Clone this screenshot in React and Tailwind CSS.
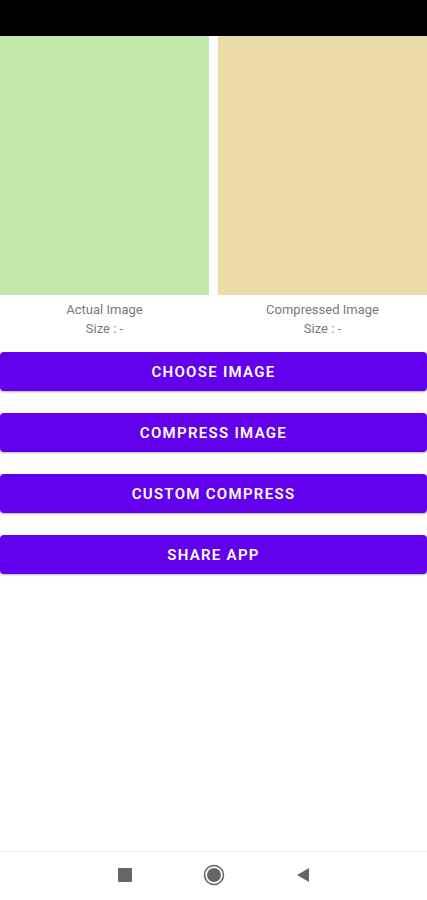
import React from 'react';

const buttons = ['Choose Image', 'Compress Image', 'Custom Compress', 'Share App'];

export default function App() {
  return (
    <div className="w-[427px] h-[900px] bg-white flex flex-col" style={{ fontFamily: 'Roboto, "Liberation Sans", sans-serif' }}>
      {/* status bar */}
      <div className="h-[36px] bg-black shrink-0"></div>

      {/* preview panels */}
      <div className="flex justify-between">
        <div className="w-[209px]">
          <div className="h-[259px] bg-[#c3e8ad]"></div>
          <div className="mt-[5px] text-center text-[13px] leading-[19px] text-[#7a7a7a]">
            <p>Actual Image</p>
            <p>Size : -</p>
          </div>
        </div>
        <div className="w-[209px]">
          <div className="h-[259px] bg-[#ecdca9]"></div>
          <div className="mt-[5px] text-center text-[13px] leading-[19px] text-[#7a7a7a]">
            <p>Compressed Image</p>
            <p>Size : -</p>
          </div>
        </div>
      </div>

      {/* actions */}
      <div className="mt-[14px] flex flex-col gap-[22px]">
        {buttons.map((label) => (
          <button
            key={label}
            className="h-[39px] w-full rounded-[4px] bg-[#6200ee] text-white text-[15px] font-semibold uppercase tracking-[1.3px] pt-[1px] shadow-[0_1px_2px_rgba(0,0,0,0.3)]"
          >
            {label}
          </button>
        ))}
      </div>

      <div className="flex-1"></div>

      {/* nav bar */}
      <div className="h-[49px] border-t border-[#f2f2f2] flex items-center justify-center gap-[71px] pb-[2px] shrink-0">
        <div className="w-[14px] h-[14px] bg-[#666666] rounded-[1px]"></div>
        <svg width="22" height="22" viewBox="0 0 22 22">
          <circle cx="11" cy="11" r="9.5" fill="none" stroke="#666666" strokeWidth="1.6" />
          <circle cx="11" cy="11" r="7" fill="#666666" />
        </svg>
        <svg width="14" height="16" viewBox="0 0 14 16">
          <path d="M13 1 L13 15 L1 8 Z" fill="#666666" />
        </svg>
      </div>
    </div>
  );
}
